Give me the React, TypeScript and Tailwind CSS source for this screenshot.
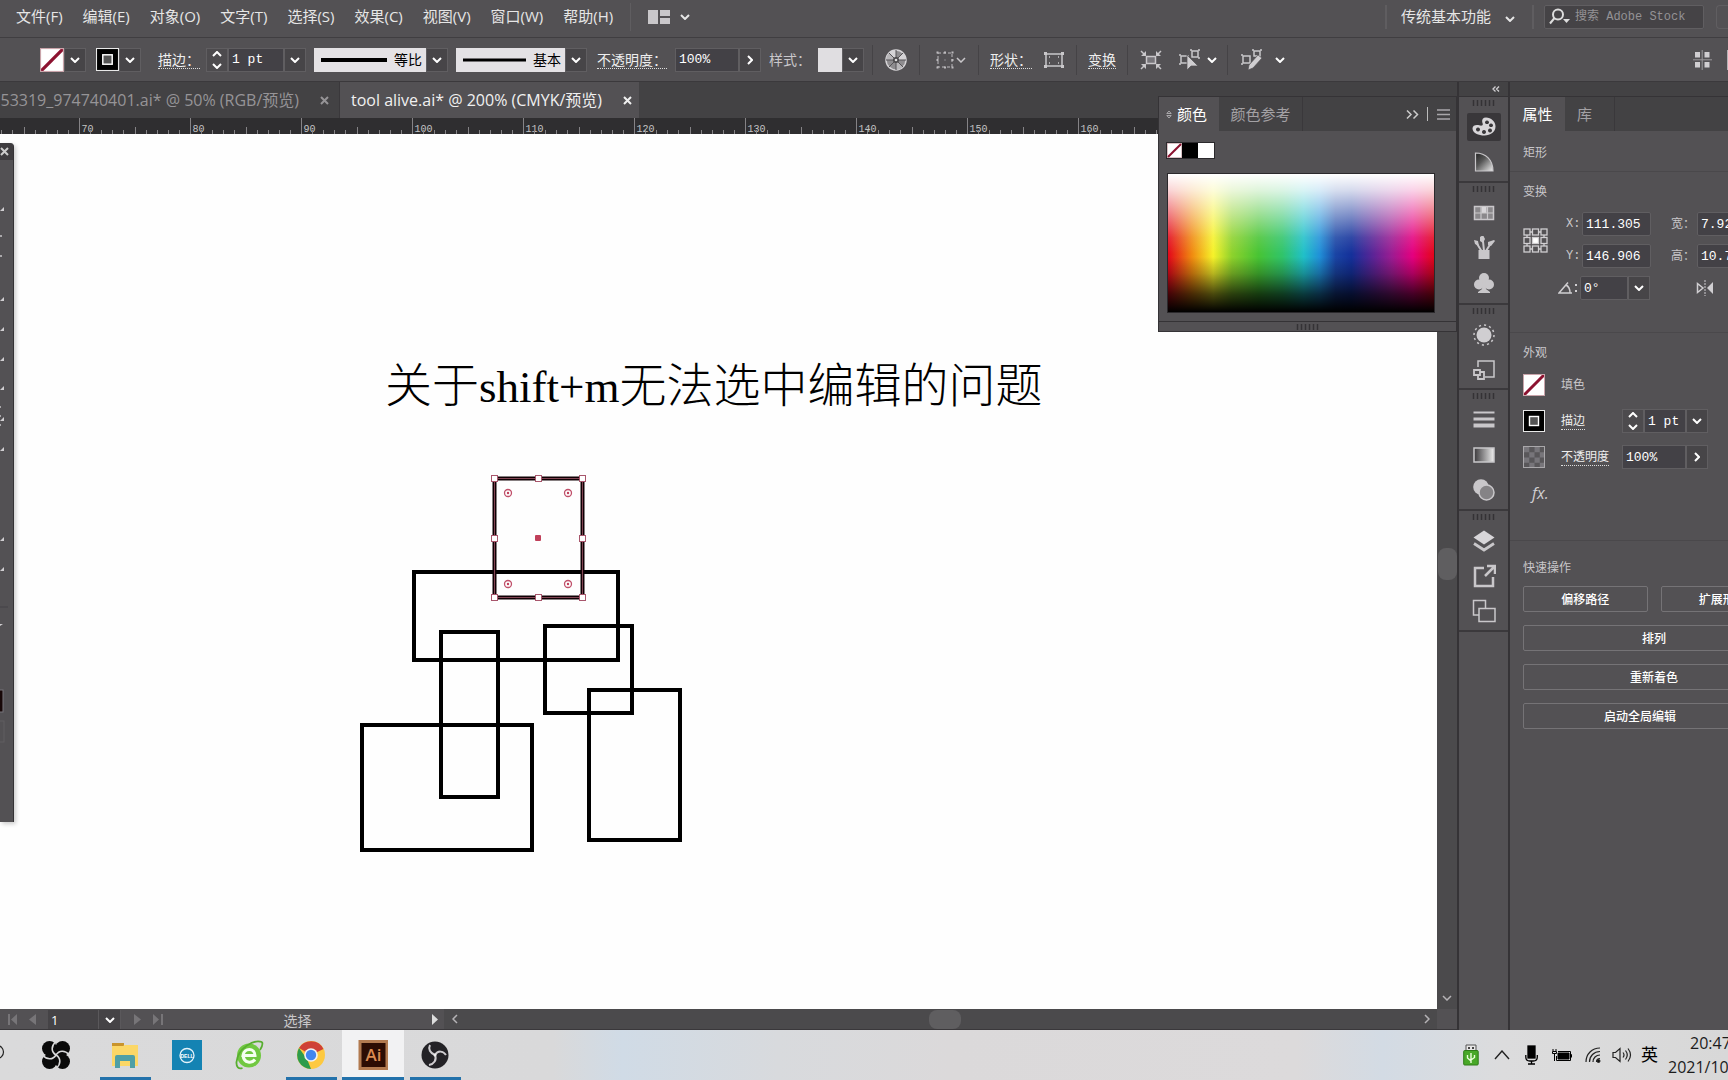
import type { ReactNode } from 'react';

const MENUS = ['文件(F)', '编辑(E)', '对象(O)', '文字(T)', '选择(S)', '效果(C)', '视图(V)', '窗口(W)', '帮助(H)'];

const RECTS = [
  { x: 414, y: 438, w: 204, h: 88 },
  { x: 441, y: 498, w: 57, h: 165 },
  { x: 545, y: 492, w: 87, h: 87 },
  { x: 589, y: 556, w: 91, h: 150 },
  { x: 362, y: 591, w: 170, h: 125 },
];

const FLYOUTS = [67, 157, 187, 217, 246, 277, 307, 397, 427];

const mono = "font-['Liberation_Mono','Noto_Sans_CJK_SC',monospace]";

const Chevron = ({ w = 10, sw = 2, className = '' }: { w?: number; sw?: number; className?: string }) => (
  <svg width={w} height={w * 0.6} viewBox="0 0 10 6" fill="none" stroke="currentColor" strokeWidth={sw} className={`shrink-0 ${className}`}>
    <path d="M1 1l4 4 4-4" />
  </svg>
);

const DropButton = ({ label, right = false }: { label: string; right?: boolean }) => (
  <button aria-label={label} className="flex h-6 w-[22px] shrink-0 items-center justify-center border border-[#605e61] bg-[#474548] text-white">
    <Chevron className={right ? '-rotate-90' : ''} />
  </button>
);

const Stepper = ({ label }: { label: string }) => (
  <div className="flex h-6 w-[22px] shrink-0 flex-col items-center justify-between border border-[#605e61] bg-[#4d4b4e] py-[2px] text-white">
    <button aria-label={`${label}增加`} className="flex"><Chevron className="rotate-180" /></button>
    <button aria-label={`${label}减少`} className="flex"><Chevron /></button>
  </div>
);

const Field = ({ label, value, className = '' }: { label: string; value: string; className?: string }) => (
  <input aria-label={label} defaultValue={value}
    className={`h-6 shrink-0 border border-[#605e61] bg-[#434146] px-[3px] text-[13px] text-white outline-none ${mono} ${className}`} />
);

const NoneSwatch = ({ size }: { size: number }) => (
  <svg width={size} height={size} viewBox="0 0 22 22" className="shrink-0">
    <rect width="22" height="22" fill="#fff" />
    <path d="M1 21L21 1" stroke="#8c1230" strokeWidth="3" />
    <rect x=".5" y=".5" width="21" height="21" fill="none" stroke="#c9a4aa" />
  </svg>
);

const StrokeSwatch = ({ size }: { size: number }) => (
  <svg width={size} height={size} viewBox="0 0 22 22" className="shrink-0">
    <rect x=".5" y=".5" width="21" height="21" fill="#000" stroke="#e8e8e8" />
    <rect x="6.500" y="6.500" width="9" height="9" fill="#555" stroke="#fff" strokeWidth="1.400" />
  </svg>
);

const Sep = () => <div className="h-[30px] w-px shrink-0 bg-[#454346]" />;

const Link = ({ children }: { children: ReactNode }) => (
  <button className="shrink-0 border-b border-dotted border-[#ddd] text-[14px] leading-[17px] text-[#eee]">{children}</button>
);

const Grip = () => (
  <svg width="24" height="6" viewBox="0 0 24 6" className="mx-auto">
    {[0, 4, 8, 12, 16, 20].map(x => <path key={x} d={`M${x + 1.5} 0v6`} stroke="#343235" strokeWidth="1.500" />)}
  </svg>
);

const MenuBar = () => (
  <header className="flex h-[38px] shrink-0 items-center overflow-hidden border-b border-[#403e41] bg-[#535154] pb-1 pl-4 text-[15px] text-[#e6e6e6]">
    <nav className="flex shrink-0 gap-5">
      {MENUS.map(m => <button key={m} className="whitespace-nowrap">{m}</button>)}
    </nav>
    <div className="ml-[17px] h-7 w-px bg-[#5f5d60]" />
    <button aria-label="排列文档" className="ml-[17px] flex shrink-0 items-center gap-[10px]">
      <svg width="22" height="14" viewBox="0 0 22 14" fill="#c9c7ca"><path d="M0 0h10v14H0zM12 0h10v6H12zM12 8h10v6H12z" /></svg>
      <Chevron />
    </button>
    <div className="ml-auto h-6 w-[2px] shrink-0 bg-[#5f5d60]" />
    <div className="ml-[14px] flex shrink-0 items-center">
      <select aria-label="工作区" className="w-[104px] appearance-none bg-transparent outline-none"><option>传统基本功能</option></select>
      <Chevron className="pointer-events-none mt-1" />
    </div>
    <div className="ml-[17px] h-6 w-[2px] shrink-0 bg-[#5f5d60]" />
    <label className="ml-[10px] flex h-6 w-[160px] shrink-0 items-center rounded-xs border border-[#605e61] bg-[#454346] pl-1">
      <svg width="22" height="17" viewBox="0 0 22 17" fill="none" stroke="#ddd" strokeWidth="2">
        <circle cx="9" cy="6.500" r="5" /><path d="M5.500 10L1 15.500" /><path d="M14 11h7l-3.500 4z" fill="#ddd" stroke="none" />
      </svg>
      <input aria-label="搜索 Adobe Stock" placeholder="搜索 Adobe Stock" className={`ml-1 w-[124px] bg-transparent text-[12px] outline-none placeholder:text-[#949295] ${mono}`} />
    </label>
    <div className="ml-3 h-6 w-3 shrink-0 rounded-l-sm border-y border-l border-[#605e61]" />
  </header>
);

const Profile = ({ name, thick, className }: { name: string; thick: number; className: string }) => (
  <div className="flex shrink-0">
    <button aria-haspopup="listbox" className={`flex h-6 items-center bg-[#e4e2e5] pr-1 pl-[7px] text-[14px] text-black ${className}`}>
      <svg className="h-2 flex-1" preserveAspectRatio="none" viewBox="0 0 60 8"><path d="M0 4h60" stroke="#000" strokeWidth={thick} /></svg>
      <span className="ml-[7px]">{name}</span>
    </button>
    <DropButton label={`${name}选项`} />
  </div>
);

const ControlBar = () => (
  <div className="flex h-11 shrink-0 items-center overflow-hidden border-b border-[#3b393c] bg-[#535154] pl-10 text-[#c9c7ca]">
    <NoneSwatch size={24} /><DropButton label="填色" />
    <div className="w-[10px] shrink-0" />
    <StrokeSwatch size={23} /><DropButton label="描边颜色" />
    <div className="w-[17px] shrink-0" />
    <Link>描边：</Link>
    <div className="w-[6px] shrink-0" />
    <Stepper label="描边" /><Field label="描边粗细" value="1 pt" className="w-14" /><DropButton label="描边粗细选项" />
    <div className="w-2 shrink-0" />
    <Profile name="等比" thick={4} className="w-28" />
    <div className="w-2 shrink-0" />
    <Profile name="基本" thick={3} className="w-[109px]" />
    <div className="w-[10px] shrink-0" />
    <Link>不透明度：</Link>
    <div className="w-2 shrink-0" />
    <Field label="不透明度" value="100%" className="w-16" /><DropButton label="不透明度选项" right />
    <div className="w-2 shrink-0" />
    <span className="shrink-0 text-[14px]">样式：</span>
    <div className="w-[7px] shrink-0" />
    <div className="h-6 w-6 shrink-0 bg-[#e0dee1]" /><DropButton label="样式" />
    <div className="flex shrink-0 items-center gap-3 pl-2">
      <Sep />
      <button aria-label="重新着色图稿">
        <svg width="22" height="22" viewBox="0 0 22 22">
          <circle cx="11" cy="11" r="10" fill="#8e8c8f" stroke="#d6d4d7" strokeWidth="1.500" />
          <path d="M11 11L4 4A10 10 0 0 1 11 1zM11 11h10a10 10 0 0 0-3-7z" fill="#d5d3d6" />
          <path d="M11 11L1 11a10 10 0 0 1 3-7zM11 11l7 7a10 10 0 0 1-7 3z" fill="#b8b6b9" />
          <path d="M11 1v20M1 11h20M4 4l14 14M18 4L4 18" stroke="#555356" />
          <circle cx="11" cy="11" r="3" fill="#4a484b" /><circle cx="11" cy="11" r="1.300" fill="#ddd" />
        </svg>
      </button>
      <Sep />
    </div>
    <button aria-label="对齐" className="ml-[15px] flex shrink-0 items-center gap-px">
      <svg width="20" height="20" viewBox="0 0 20 20" fill="#bdbbbe" stroke="#bdbbbe">
        <path d="M3 3h14v14H3z" fill="none" strokeDasharray="3 2" />
        <path d="M1.500 1.500h2v2h-2zM9 1.500h2v2H9zM16.500 1.500h2v2h-2zM1.500 16.500h2v2h-2zM9 16.500h2v2H9zM16.500 16.500h2v2h-2zM1.500 9h2v2h-2zM16.500 9h2v2h-2zM9.500 9.500h1v1h-1z" stroke="none" />
      </svg>
      <Chevron sw={1.5} />
    </button>
    <div className="flex shrink-0 items-center gap-[11px] pl-3">
      <Sep /><Link>形状：</Link>
      <svg width="22" height="18" viewBox="0 0 22 18" fill="none" stroke="#c9c7ca" strokeWidth="1.500">
        <path d="M3 3h16v12H3z" /><path d="M1 1h3v3H1zM18 1h3v3h-3zM1 14h3v3H1zM18 14h3v3h-3z" fill="#c9c7ca" stroke="none" />
        <path d="M6 6h1M15 6h1M6 12h1M15 12h1" />
      </svg>
      <Sep /><Link>变换</Link><Sep />
    </div>
    <button aria-label="隔离选中的对象" className="ml-3 shrink-0">
      <svg width="22" height="20" viewBox="0 0 22 20" fill="none" stroke="#c9c7ca" strokeWidth="1.500">
        <path d="M6.500 6.500h9v7h-9z" fill="#77757a" /><path d="M1 1l4 4M21 1l-4 4M1 19l4-4M21 19l-4-4" />
        <path d="M6 1v5H1zM16 1v5h5zM6 19v-5H1zM16 19v-5h5z" fill="#c9c7ca" stroke="none" />
      </svg>
    </button>
    <button aria-label="选择类似的对象" className="ml-[17px] flex shrink-0 items-center gap-[6px] text-white">
      <svg width="22" height="22" viewBox="0 0 22 22" fill="none" stroke="#c9c7ca" strokeWidth="1.500">
        <path d="M2 7h7v7H2zM13 2h6v6h-6z" /><path d="M0 6h2M0 15h2M11 1h2M19 1h2M19 9h2" />
        <path d="M8 6v15l4-4h7z" fill="#d0ced1" stroke="#535154" strokeWidth=".7" />
      </svg>
      <Chevron />
    </button>
    <div className="w-[10px] shrink-0" />
    <Sep />
    <button aria-label="编辑路径" className="ml-[13px] flex shrink-0 items-center gap-3 text-white">
      <svg width="22" height="22" viewBox="0 0 22 22" fill="none" stroke="#c9c7ca" strokeWidth="1.500">
        <path d="M2 7h7v7H2zM13 2h6v5h-6z" /><path d="M0 6h2M0 15h2M11 1h2M19 1h2" />
        <path d="M17 6l4 3-9 10-5 2 1-5z" fill="#d0ced1" stroke="#535154" strokeWidth=".7" />
      </svg>
      <Chevron />
    </button>
    <button aria-label="对齐到像素网格" className="mr-[15px] ml-auto shrink-0">
      <svg width="19" height="20" viewBox="0 0 19 20" fill="#d0ced1">
        <path d="M2 2h5v5.500H2zM11.500 2h5v5.500h-5zM2 12h5v5.500H2zM11.500 12h5v5.500h-5z" />
        <path d="M9.200 0v20M0 9.800h19" stroke="#9a989b" />
      </svg>
    </button>
    <div className="h-5 w-px shrink-0 bg-[#b5b3b6]" />
  </div>
);

const DocTabs = () => (
  <div className="flex h-9 shrink-0 items-stretch overflow-hidden bg-[#434244] text-[16px]">
    <div className="flex w-[340px] shrink-0 items-center justify-end border-r border-[#3a383b] pr-[10px] text-[#969497]">
      <button className="whitespace-nowrap">853319_974740401.ai* @ 50% (RGB/预览)</button>
      <button aria-label="关闭 853319_974740401.ai" className="ml-[21px]"><Cross /></button>
    </div>
    <div className="flex shrink-0 items-center bg-[#535154] pr-[7px] pl-[11px] text-[#f0f0f0]">
      <button className="whitespace-nowrap">tool alive.ai* @ 200% (CMYK/预览)</button>
      <button aria-label="关闭 tool alive.ai" className="ml-[21px]"><Cross /></button>
    </div>
  </div>
);

const Cross = () => (
  <svg width="9" height="9" viewBox="0 0 9 9" stroke="currentColor" strokeWidth="2"><path d="M1 1l7 7M8 1L1 8" /></svg>
);

const Ruler = () => (
  <svg className="h-4 w-full shrink-0 bg-[#2f2e30]">
    {Array.from({ length: 105 }, (_, i) => {
      const v = 63 + i;
      const x = Math.round(80 + (v - 70) * 11.1) - 0.5;
      const top = v % 10 === 0 ? 0 : v % 5 === 0 ? 9 : 12;
      return (
        <g key={v}>
          <path d={`M${x} ${top}V16`} stroke="#858386" />
          {v % 10 === 0 && <text x={x + 2} y={14} fontSize="10" fill="#c4c4c4" className="font-['Liberation_Mono',monospace]">{v}</text>}
        </g>
      );
    })}
  </svg>
);

const Artwork = () => (
  <svg className="absolute inset-0 h-full w-full" fill="none">
    <text x="385" y="268" fontSize="47" fill="#000" className="font-['Liberation_Serif','Noto_Sans_CJK_SC',serif] font-light">
      关于<tspan fontSize="45">shift+m</tspan>无法选中编辑的问题
    </text>
    {RECTS.map(r => <rect key={r.x} x={r.x} y={r.y} width={r.w} height={r.h} stroke="#000" strokeWidth="4" />)}
    <rect x="494.500" y="344.500" width="88" height="119" stroke="#100004" strokeWidth="4" />
    <rect x="494.500" y="344.500" width="88" height="119" stroke="#9c5566" strokeWidth=".8" />
    {[494.5, 538.5, 582.5].map(x => [344.5, 404.5, 463.5].map(y => (
      x === 538.5 && y === 404.5
        ? <rect key={`${x}-${y}`} x="535" y="401" width="6" height="6" rx="1" fill="#c0405a" />
        : <rect key={`${x}-${y}`} x={x - 3} y={y - 3} width="6" height="6" fill="#fff" stroke="#a8566c" />
    )))}
    {[508, 568].map(x => [359, 450].map(y => (
      <g key={`${x}-${y}`}>
        <circle cx={x} cy={y} r="3.500" stroke="#c0506a" strokeWidth="1.300" />
        <circle cx={x} cy={y} r="1.200" fill="#c0405a" />
      </g>
    )))}
  </svg>
);

// only the right edge of the floating toolbar is on screen
const Toolbar = () => (
  <aside className="absolute top-[9px] left-0 h-[679px] w-[14px] rounded-tr-sm border-r border-[#343235] bg-[#535154] shadow-[2px_2px_4px_rgba(0,0,0,0.2)]">
    <button aria-label="关闭工具" className="flex h-[17px] w-full items-center rounded-tr-sm bg-[#3e3c3f] text-[#ccc]"><Cross /></button>
    <svg width="13" height="660" viewBox="0 17 13 660" className="block">
      {FLYOUTS.map(y => <path key={y} d={`M4 ${y - 3}v4H0z`} fill="#d0ced1" />)}
      <path d="M0 93h2M0 113h2M0 264h1M0 273h1M0 282h1" stroke="#aaa8ab" strokeWidth="2" />
      <path d="M0 464h8" stroke="#454346" />
      <path d="M0 481h3l-3 2z" fill="#d0ced1" />
      <rect x="-5" y="547" width="8" height="22" fill="#180808" stroke="#77757a" />
      <rect x="-5" y="578" width="9" height="21" stroke="#605e61" fill="none" />
    </svg>
  </aside>
);

const ColorPanel = () => (
  <section className="absolute top-[14px] right-0 w-[299px] border border-[#353336] bg-[#535154]">
    <div className="flex h-[34px] items-stretch bg-[#434244] text-[15px]">
      <button className="flex w-[60px] items-center gap-[5px] bg-[#535154] pl-[7px] text-white">
        <svg width="6" height="9" viewBox="0 0 6 9" fill="none" stroke="#a9a7aa"><path d="M.8 3.500L3 1l2.200 2.500zM.8 5.500L3 8l2.200-2.500z" /></svg>
        颜色
      </button>
      <button className="w-[84px] border-r border-[#3a383b] text-[#a3a1a4]">颜色参考</button>
      <div className="ml-auto flex items-center pr-[6px] text-[#ccc]">
        <button aria-label="折叠面板">
          <svg width="13" height="9" viewBox="0 0 13 9" fill="none" stroke="currentColor" strokeWidth="1.500"><path d="M1 .5l4 4-4 4M7.500 .5l4 4-4 4" /></svg>
        </button>
        <div className="ml-2 h-[14px] w-px bg-[#bbb]" />
        <button aria-label="面板菜单" className="ml-[9px]">
          <svg width="13" height="11" viewBox="0 0 13 11" stroke="#a9a7aa" strokeWidth="1.500"><path d="M0 1h13M0 5.500h13M0 10h13" /></svg>
        </button>
      </div>
    </div>
    <div className="pt-[11px] pl-[7px]">
      <div className="flex w-fit border border-[#2b292c]">
        <NoneSwatch size={15} />
        <button aria-label="黑色" className="h-[15px] w-4 bg-black" />
        <button aria-label="白色" className="h-[15px] w-4 bg-white" />
      </div>
    </div>
    <div className="mx-2 mt-[14px] mr-[21px] h-[140px] border border-[#2b292c] bg-[linear-gradient(to_bottom,#fff_0%,rgba(255,255,255,0.82)_12%,rgba(255,255,255,0.45)_30%,rgba(255,255,255,0.12)_46%,rgba(255,255,255,0)_58%,rgba(0,0,0,0)_60%,rgba(0,0,0,0.25)_72%,rgba(0,0,0,0.7)_87%,#000_100%),linear-gradient(to_right,#e3061a_0%,#f08a10_9%,#f6f22a_17%,#8ed22c_24%,#48c434_34%,#30c46a_43%,#20c0c8_51%,#2090d8_57%,#1a44a4_63%,#14309a_69%,#5a2496_77%,#9a1c92_84%,#e4007f_92%,#e3061a_100%)]" />
    <div className="mt-2 flex h-[10px] items-center border-t border-[#353336]"><Grip /></div>
  </section>
);

const StatusBar = () => (
  <footer className="flex h-[21px] shrink-0 items-stretch border-b border-[#3a383b] bg-[#4b4a4c] text-[#777578]">
    <div className="flex w-[444px] shrink-0 items-center bg-[#535154] pt-px pl-2">
      <button aria-label="首项"><svg width="10" height="11" viewBox="0 0 10 11" fill="currentColor"><path d="M0 0h2v11H0zM9 0v11L3 5.500z" /></svg></button>
      <button aria-label="上一项" className="ml-[11px]"><svg width="8" height="11" viewBox="0 0 8 11" fill="currentColor"><path d="M7 0v11L0 5.500z" /></svg></button>
      <div className="relative ml-[11px] h-full w-[73px] bg-[#454346]">
        <select aria-label="画板" className="block h-full w-full appearance-none pl-[3px] text-[13px] leading-[18px] text-white outline-none"><option>1</option></select>
        <span className="pointer-events-none absolute inset-y-0 right-0 flex w-[23px] items-center justify-center border-x border-[#5a585b] text-white"><Chevron /></span>
      </div>
      <button aria-label="下一项" className="ml-3"><svg width="8" height="11" viewBox="0 0 8 11" fill="currentColor"><path d="M1 0v11l7-5.500z" /></svg></button>
      <button aria-label="末项" className="ml-[11px]"><svg width="11" height="11" viewBox="0 0 11 11" fill="currentColor"><path d="M1 0v11l6-5.500zM9 0h2v11H9z" /></svg></button>
      <div className="flex flex-1 justify-center pt-[2px] text-[14px] leading-none text-[#c9c7ca]">选择</div>
      <button aria-label="状态栏选项" className="mr-[5px]"><svg width="7" height="11" viewBox="0 0 7 11" fill="#ddd"><path d="M0 0v11l6-5.500z" /></svg></button>
    </div>
    <div className="flex flex-1 items-center justify-between pr-[5px] pl-[6px] text-[#b5b3b6]">
      <Chevron sw={1.5} className="rotate-90" />
      <div className="ml-2 h-[19px] w-8 rounded-lg bg-[#5f5e60]" />
      <Chevron sw={1.5} className="-rotate-90" />
    </div>
    <div className="w-5 shrink-0 bg-[#535154]" />
  </footer>
);

const DockItem = ({ label, active, children }: { label: string; active?: boolean; children: ReactNode }) => (
  <button aria-label={label} className={`flex h-7 w-[34px] items-center justify-center rounded-xs ${active ? 'bg-[#39373a]' : ''}`}>
    <svg width="24" height="24" viewBox="0 0 24 24" fill="none" stroke="#c9c7ca" strokeWidth="2">{children}</svg>
  </button>
);

const DockGroup = ({ children, className = '' }: { children: ReactNode; className?: string }) => (
  <div className={`flex flex-col items-center gap-[7px] border-b-2 border-[#3b393c] pt-[3px] ${className}`}>
    <Grip />
    {children}
  </div>
);

const Dock = () => (
  <aside className="flex w-[53px] shrink-0 flex-col border-x-2 border-[#353336] bg-[#535154]">
    <div className="flex h-[15px] items-center justify-end border-b border-[#353336] bg-[#434244] pr-[8px]">
      <button aria-label="展开面板"><svg width="8" height="6" viewBox="0 0 8 6" fill="none" stroke="#d0ced1" strokeWidth="1.300"><path d="M3.500 .5L1 3l2.500 2.500M7 .5L4.500 3 7 5.500" /></svg></button>
    </div>
    <DockGroup className="pb-[5px]">
      <DockItem label="颜色" active>
        <path fillRule="evenodd" stroke="none" fill="#d8d6d9" d="M14 2.500c5 0 9.500 4 9.500 9 0 5.500-5 9-11 9S.5 18 .5 13.500c0-2.500 2-3.500 4.500-3.500 2 0 3.500 1 5 .5 1.500-.6.500-2 .2-3.500C9.800 4.500 11 2.500 14 2.500zM15 5.500a2 1.800 0 1 0 .01 0zM19 8.500a2 1.800 0 1 0 .01 0zM18 13.500a2 2 0 1 0 .01 0zM12 15a2 2 0 1 0 .01 0zM6 12.500a2 2 0 1 0 .01 0z" />
      </DockItem>
      <DockItem label="颜色参考">
        <defs><linearGradient id="guide" x1="0" y1="0" x2="1" y2="1"><stop offset="0" stopColor="#222" /><stop offset=".4" stopColor="#555" /><stop offset="1" stopColor="#eee" /></linearGradient></defs>
        <path d="M3.500 3v18H21C21 10 14 3 3.500 3z" fill="url(#guide)" stroke="#c8c6c9" strokeWidth="1.200" />
      </DockItem>
    </DockGroup>
    <DockGroup className="pb-[6px]">
      <DockItem label="色板">
        <path d="M2.500 5.500h19v13h-19z" fill="#8a888b" strokeWidth="1.500" />
        <path d="M9.500 6h5v6h-5z" fill="#d8d6d9" stroke="none" /><path d="M9 6v12M15.500 6v12M3 12h18" stroke="#c9c7ca" strokeWidth="1.200" />
      </DockItem>
      <DockItem label="画笔">
        <path d="M6.500 14h11v9h-11z" fill="#c9c7ca" stroke="none" />
        <path d="M9.500 15L4.500 7M12 15l-1-10M14 15l5-8" strokeWidth="2" />
        <path d="M2 4l4 1 1 5-4-2zM8 1l3-2 2 4-2 4-3-2zM16 6l6-2 1 1-4 5-3-1z" fill="#c9c7ca" stroke="none" />
      </DockItem>
      <DockItem label="符号">
        <g fill="#c9c7ca" stroke="none"><circle cx="12" cy="7" r="5" /><circle cx="7" cy="13.500" r="5" /><circle cx="17" cy="13.500" r="5" /><path d="M11 9h2l1 9 4 3v1H6v-1l4-3z" /></g>
      </DockItem>
    </DockGroup>
    <DockGroup className="pb-1">
      <DockItem label="外观">
        <circle cx="12" cy="12" r="7.500" fill="#d0ced1" stroke="none" /><circle cx="12" cy="12" r="10" strokeWidth="1.500" strokeDasharray="2.200 3" />
      </DockItem>
      <DockItem label="图形样式">
        <path d="M6 9V3h16v16h-9" strokeWidth="1.500" /><path d="M2 12h6v5H2z" strokeWidth="1.800" /><path d="M8 14h4v7H6v-3" strokeWidth="1.800" />
      </DockItem>
    </DockGroup>
    <DockGroup className="pb-[5px]">
      <DockItem label="描边"><path d="M1.500 4.500h21" strokeWidth="2" /><path d="M1.500 11h21" strokeWidth="3" /><path d="M1.500 17.500h21" strokeWidth="4" /></DockItem>
      <DockItem label="渐变">
        <defs><linearGradient id="ramp"><stop offset="0" stopColor="#39373a" /><stop offset="1" stopColor="#eee" /></linearGradient></defs>
        <path d="M2 5h20v14H2z" fill="url(#ramp)" strokeWidth="1.500" />
      </DockItem>
      <DockItem label="透明度">
        <circle cx="9" cy="9" r="7.800" fill="#c9c7ca" stroke="none" /><circle cx="14.500" cy="14.500" r="7.500" fill="#858386" strokeWidth="1.500" />
      </DockItem>
    </DockGroup>
    <DockGroup className="pb-[5px]">
      <DockItem label="图层">
        <path d="M12 1.500l10.500 7L12 15.500 1.500 8.500z" fill="#d8d6d9" stroke="none" /><path d="M2 14.500l10 6.500 10-6.500" strokeWidth="2.800" />
      </DockItem>
      <DockItem label="资源导出"><path d="M12 4H3v18h18v-9" strokeWidth="2.500" /><path d="M15 2h8v8M22 3l-9 9" strokeWidth="2.500" /></DockItem>
      <DockItem label="画板"><path d="M7 16H1.500V1.500h12V9" strokeWidth="1.500" /><path d="M7 9.500h16v13H7z" strokeWidth="1.500" /></DockItem>
    </DockGroup>
  </aside>
);

const ActionButton = ({ children, className = '' }: { children: ReactNode; className?: string }) => (
  <button className={`h-[26px] shrink-0 rounded-xs border border-[#757376] pt-px text-[12px] font-medium whitespace-nowrap text-white ${className}`}>{children}</button>
);

const Transform = () => (
  <section className="border-b border-[#4a484b] px-[13px] pt-3 pb-8">
    <h3 className="leading-4">变换</h3>
    <div className="mt-3 flex">
      <svg width="25" height="25" viewBox="0 0 25 25" fill="none" stroke="#d0ced1" strokeWidth="1.300" className="mt-4 shrink-0">
        {[1, 9.5, 18].map(x => [1, 9.5, 18].map(y => (
          <rect key={`${x}-${y}`} x={x} y={y} width="6" height="6" fill={x === 9.5 && y === 9.5 ? '#fff' : 'none'} />
        )))}
        <path d="M7 4h2.500M15.500 4H18M7 21h2.500M15.500 21H18M4 7v2.500M4 15.500V18M21 7v2.500M21 15.500V18" />
      </svg>
      <div className="ml-[14px] flex shrink-0 flex-col gap-2">
        {[['X', '111.305'], ['Y', '146.906']].map(([k, v]) => (
          <label key={k} className="flex items-center">
            <span className={`w-5 pl-1 text-[12px] ${mono}`}>{k}:</span>
            <Field label={k} value={v} className="w-[69px] rounded-xs" />
          </label>
        ))}
        <label className="flex items-center">
          <svg width="20" height="14" viewBox="0 0 20 14" fill="none" stroke="#d0ced1" strokeWidth="1.500" className="-ml-1"><path d="M14 12H1L10 1.500M8 4c2 1 4 4 4 8" /><path d="M17 4h2M17 10h2" strokeWidth="2" /></svg>
          <span className="w-[2px]" />
          <Field label="旋转角度" value="0°" className="w-[48px] rounded-l-xs" /><DropButton label="角度选项" />
        </label>
      </div>
      <div className="ml-5 flex shrink-0 flex-col gap-2">
        {[['宽', '7.921'], ['高', '10.702']].map(([k, v]) => (
          <label key={k} className="flex items-center">
            <span className="w-[26px] whitespace-nowrap text-[12px]">{k}：</span>
            <Field label={k} value={v} className="w-[69px] rounded-xs" />
          </label>
        ))}
        <button aria-label="水平翻转" className="mt-1 ml-[25px] w-fit">
          <svg width="18" height="16" viewBox="0 0 18 16"><path d="M1.500 3.500v9L7 8z" fill="none" stroke="#d0ced1" strokeWidth="1.500" /><path d="M17 2v12l-6-6z" fill="#d0ced1" /><path d="M9 0v16" stroke="#d0ced1" strokeDasharray="2 1" /></svg>
        </button>
      </div>
    </div>
  </section>
);

const Appearance = () => (
  <section className="flex h-[208px] flex-col border-b border-[#4a484b] px-[13px] pt-3">
    <h3 className="leading-4">外观</h3>
    <div className="mt-[6px] flex h-9 items-center">
      <NoneSwatch size={22} /><span className="ml-4">填色</span>
    </div>
    <div className="flex h-9 items-center">
      <StrokeSwatch size={22} />
      <button className="ml-4 border-b border-dotted border-[#ddd] leading-4 text-[#eee]">描边</button>
      <div className="ml-[37px] flex shrink-0"><Stepper label="描边粗细" /><Field label="粗细" value="1 pt" className="w-[42px]" /><DropButton label="粗细选项" /></div>
    </div>
    <div className="flex h-9 items-center">
      <svg width="22" height="22" viewBox="0 0 21 21" className="shrink-0">
        <rect x=".5" y=".5" width="20" height="20" fill="#77757a" stroke="#a9a7aa" />
        <path d="M6 1h5v5H6zM16 1h4v5h-4zM1 6h5v5H1zM11 6h5v5h-5zM6 11h5v5H6zM16 11h4v5h-4zM1 16h5v4H1zM11 16h5v4h-5z" fill="#59575a" />
      </svg>
      <button className="ml-4 shrink-0 border-b border-dotted border-[#ddd] leading-4 text-[#eee]">不透明度</button>
      <div className="ml-[13px] flex shrink-0"><Field label="不透明度" value="100%" className="w-16" /><DropButton label="不透明度选项" right /></div>
    </div>
    <button aria-label="选取效果" className="mt-[6px] ml-[9px] w-fit font-['Open_Sans',sans-serif] text-[16px] text-[#d0ced1] italic">fx.</button>
  </section>
);

const Properties = () => (
  <aside className="w-[218px] shrink-0 overflow-hidden bg-[#535154] text-[12px] text-[#c9c7ca]">
    <div className="h-[15px] border-b border-[#353336] bg-[#434244]" />
    <div className="flex h-[34px] items-stretch bg-[#434244] text-[15px]">
      <button className="w-[55px] bg-[#535154] text-white">属性</button>
      <button className="w-[50px] border-r border-[#3a383b] pr-[10px] text-[#a3a1a4]">库</button>
    </div>
    <div className="flex h-[41px] items-center border-b border-[#4a484b] pt-[3px] pl-[13px]">矩形</div>
    <Transform />
    <Appearance />
    <section className="pt-[19px] pl-[13px]">
      <h3 className="leading-4">快速操作</h3>
      <div className="mt-[10px] flex w-[262px] flex-col gap-[13px]">
        <div className="flex gap-[13px]"><ActionButton className="flex-1">偏移路径</ActionButton><ActionButton className="flex-1">扩展形状</ActionButton></div>
        <ActionButton>排列</ActionButton>
        <ActionButton>重新着色</ActionButton>
        <ActionButton className="pr-7">启动全局编辑</ActionButton>
      </div>
    </section>
  </aside>
);

const TaskItem = ({ label, running, active, children }: { label: string; running?: boolean; active?: boolean; children: ReactNode }) => (
  <button aria-label={label} className={`flex h-full w-[62px] shrink-0 flex-col items-center ${active ? 'bg-[#f2f2f3]' : ''}`}>
    <span className="flex flex-1 items-center pt-[2px]"><svg width="30" height="30" viewBox="0 0 30 30">{children}</svg></span>
    <span className={`h-[3px] ${active ? 'w-full' : 'w-[51px]'} ${running ? 'bg-[#2372ab]' : ''}`} />
  </button>
);

const Taskbar = () => (
  <footer className="flex h-[50px] shrink-0 items-stretch overflow-hidden bg-[linear-gradient(to_right,#dadadb_0%,#d9d9da_32%,#d0dbe6_36%,#d8dadd_45%,#dbd9da_55%,#dcdadb_75%,#d3dbe4_80%,#dcdcdd_87%,#d8d8d8_100%)]">
    <svg width="5" height="50" viewBox="0 0 5 50" fill="none" className="shrink-0"><circle cx="-3" cy="22" r="6.500" stroke="#222" strokeWidth="1.200" /></svg>
    <div className="w-5 shrink-0" />
    <TaskItem label="应用">
      <g fill="#0a0a0a">
        <circle cx="8.500" cy="8.500" r="7.500" /><circle cx="21.500" cy="8.500" r="7.500" /><circle cx="8.500" cy="21.500" r="7.500" /><circle cx="21.500" cy="21.500" r="7.500" />
        <circle cx="15" cy="15" r="6" />
      </g>
      <path d="M15 15C10 12 10 6 14.500 2M15 15C18 10 24 10 28 14.500M15 15C20 18 20 24 15.500 28M15 15C12 20 6 20 2 15.500" fill="none" stroke="#dadadb" strokeWidth="1.600" />
    </TaskItem>
    <div className="w-[7px] shrink-0" />
    <TaskItem label="文件资源管理器" running>
      <path d="M2 3h12v5H2z" fill="#c9942c" /><path d="M2 6h11l2-1h13v21H2z" fill="#fbd767" />
      <path d="M5 28V17q0-2 2-2h16q2 0 2 2v11h-5v-7H10v7z" fill="#4f9fa5" />
    </TaskItem>
    <TaskItem label="Dell">
      <rect width="30" height="30" fill="#1483b3" /><circle cx="15" cy="15.500" r="7" fill="none" stroke="#e4f3fa" strokeWidth="1.300" />
      <text x="15" y="17.500" fontSize="5" fontWeight="700" fill="#fff" textAnchor="middle" className="font-['Liberation_Sans',sans-serif]">DELL</text>
    </TaskItem>
    <TaskItem label="浏览器">
      <circle cx="15" cy="15.500" r="12" fill="#70c840" /><path d="M9 15.500h12c0-8-11-8-12 0zm0 0c1 8 9 8 12 4" fill="none" stroke="#f4fff0" strokeWidth="3" />
      <path d="M28 2C20-1 4 8 2.500 22c-.4 5 2 7.500 6 6M28 2c1 2 0 5-2 8" fill="none" stroke="#58ae30" strokeWidth="1.800" />
    </TaskItem>
    <TaskItem label="Chrome" running>
      <circle cx="15" cy="15" r="14" fill="#fdc940" />
      <path d="M15 15L3 8a14 14 0 0 1 24.500 1z" fill="#cf4137" /><path d="M3 8l8 11 4 10A14 14 0 0 1 3 8z" fill="#2d9c4c" />
      <circle cx="15" cy="15" r="6.800" fill="#f2f2f2" /><circle cx="15" cy="15" r="5.200" fill="#4285ee" />
    </TaskItem>
    <TaskItem label="Illustrator" running active>
      <rect x="2" y="1.500" width="27" height="27" fill="#2c0c03" stroke="#b27a50" strokeWidth="3" />
      <text x="15.500" y="21" fontSize="17" fill="#d98a50" textAnchor="middle" className="font-['Open_Sans',sans-serif] font-semibold">Ai</text>
    </TaskItem>
    <TaskItem label="OBS" running>
      <circle cx="15" cy="15" r="13.500" fill="#232226" /><g fill="none" stroke="#cfcdd0" strokeWidth="2">
        <path d="M15 15C10 13 8 9 10 5" /><path d="M15 15C18 10 23 11 26 15" /><path d="M15 15C17 20 14 24 9 25" /></g>
      <circle cx="15" cy="15" r="1.500" fill="#eee" />
    </TaskItem>
    <div className="ml-auto flex shrink-0 items-center">
      <svg width="16" height="22" viewBox="0 0 16 22" className="mr-[15px]"><path d="M3 1h10v6H3z" fill="#e8e8e8" stroke="#555" /><path d="M5 3h2v2H5zM9 3h2v2H9z" fill="#444" /><rect x=".7" y="6.500" width="14.500" height="14.500" rx="1" fill="#48a828" stroke="#2e7c18" /><path d="M8 9v10M4.500 11v3L8 17M11.500 11v2.500L8 16" stroke="#eaffda" strokeWidth="1.400" fill="none" /></svg>
      <svg width="16" height="10" viewBox="0 0 16 10" fill="none" stroke="#222" strokeWidth="1.400" className="mr-[15px]"><path d="M1 9l7-8 7 8" /></svg>
      <svg width="13" height="20" viewBox="0 0 13 20" fill="none" stroke="#000" strokeWidth="1.300" className="mr-[14px]"><rect x="3" y="1" width="7" height="12" fill="#000" /><path d="M.8 10v2q0 4 4 4h3.500q4 0 4-4v-2M6.500 16v3M3 19h7" /></svg>
      <svg width="20" height="14" viewBox="0 0 20 14" fill="none" stroke="#000" className="mr-[13px]"><path d="M6 3.500h12.500v9H4.500V8" /><path d="M6 5h11v6H6z" fill="#000" /><path d="M18.500 6.500h1v3M1 1v2M4 1v2M.5 3.500h4v2h-4zM2.500 6v7" /></svg>
      <svg width="16" height="16" viewBox="0 0 16 16" fill="none" stroke="#222" className="mr-[11px]"><path d="M1 15C1 7 7 1 15 1M4.500 15C4.500 9 9 4.500 15 4.500M8 15c0-4 3-7 7-7M11.500 15c0-2 1.500-3.500 3.500-3.500" strokeWidth="1.200" /><circle cx="13.500" cy="14" r="1.500" fill="#111" /></svg>
      <svg width="20" height="16" viewBox="0 0 20 16" fill="none" stroke="#222" strokeWidth="1.200" className="mr-[9px]"><path d="M1 5.500h2.500L8 1.500v13L3.500 10.500H1zM11 5.500q2 2.500 0 5M13.500 3.500q3.500 4.500 0 9M16 1.500q5 6.500 0 13" /></svg>
      <span className="mr-[9px] text-[17px] text-black">英</span>
      <div className="w-[61px] overflow-hidden pl-px text-[16px] leading-6 text-[#1c1c1c]">
        <div className="pl-[22px]">20:47</div>
        <div className="whitespace-nowrap">2021/10</div>
      </div>
    </div>
  </footer>
);

const App = () => (
  <div className="flex h-screen w-full flex-col overflow-hidden bg-[#535154] font-['Open_Sans','Noto_Sans_CJK_SC',sans-serif]">
    <MenuBar />
    <ControlBar />
    <main className="flex min-h-0 flex-1">
      <div className="relative flex min-w-0 flex-1 flex-col">
        <DocTabs />
        <Ruler />
        <div className="flex min-h-0 flex-1">
          <div className="relative min-w-0 flex-1 overflow-hidden bg-[#fefefe]">
            <Artwork />
            <Toolbar />
          </div>
          <div className="flex w-5 shrink-0 flex-col items-center bg-[#4b4a4c] text-[#b5b3b6]">
            <div className="flex flex-1 items-center pt-[6px]"><div className="h-8 w-[19px] rounded-lg bg-[#5f5e60]" /></div>
            <div className="flex h-[22px] items-center"><Chevron sw={1.5} /></div>
          </div>
        </div>
        <StatusBar />
        <ColorPanel />
      </div>
      <Dock />
      <Properties />
    </main>
    <Taskbar />
  </div>
);

export default App;
